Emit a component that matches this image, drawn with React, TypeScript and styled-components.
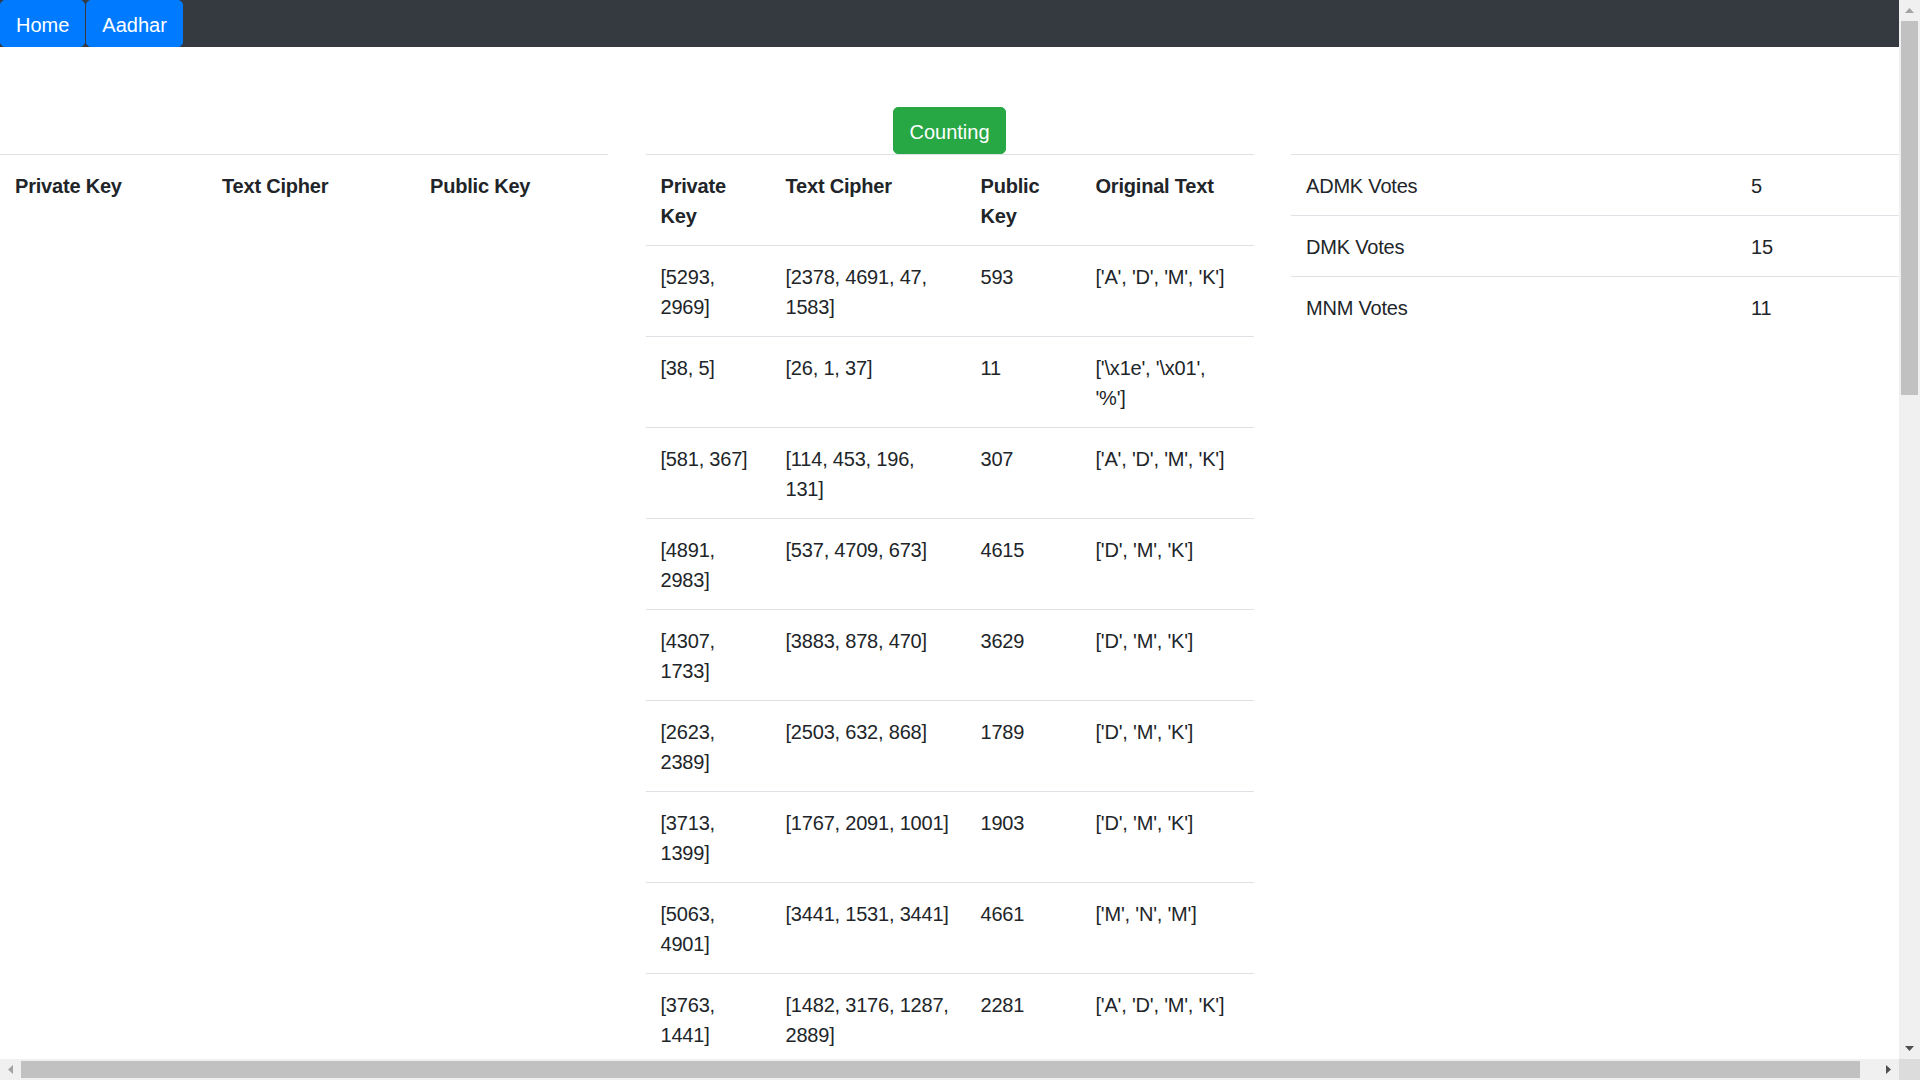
import React from "react";
import styled, { createGlobalStyle } from "styled-components";

const GlobalStyle = createGlobalStyle`
  *, *::before, *::after { box-sizing: border-box; }
  html, body { margin: 0; padding: 0; overflow: hidden; background: #fff; }
  body {
    font-family: "Liberation Sans", Arial, sans-serif;
    font-size: 20px;
    line-height: 1.5;
    color: #212529;
  }
`;

/* ---------- window frame with browser scrollbars ---------- */
const Frame = styled.div`
  display: grid;
  grid-template-columns: 1fr 21px;
  grid-template-rows: 1fr 21px;
  width: 100vw;
  height: 100vh;
`;

const Viewport = styled.div`
  min-width: 0;
  min-height: 0;
  overflow: hidden;
  background: #fff;
`;

const VScrollbar = styled.div`
  display: flex;
  flex-direction: column;
  background: #f0f0f0;
`;

const HScrollbar = styled.div`
  display: flex;
  background: #f0f0f0;
`;

const ScrollCorner = styled.div`
  background: #dcdcdc;
`;

const ArrowButton = styled.div`
  flex: none;
  width: 21px;
  height: 21px;
  display: flex;
  align-items: center;
  justify-content: center;
`;

const VTrack = styled.div`
  flex: 1;
  padding: 0 2px;
`;

const HTrack = styled.div`
  flex: 1;
  padding: 2px 0;
`;

const VThumb = styled.div`
  height: 374px;
  background: #c1c1c1;
`;

const HThumb = styled.div`
  width: 1839px;
  height: 100%;
  background: #c1c1c1;
`;

type Dir = "up" | "down" | "left" | "right";
const Arrow: React.FC<{ dir: Dir; color: string }> = ({ dir, color }) => {
  const pts: Record<Dir, string> = {
    up: "0,5 4.5,0 9,5",
    down: "0,0 9,0 4.5,5",
    left: "5,0 5,9 0,4.5",
    right: "0,0 0,9 5,4.5",
  };
  const vertical = dir === "up" || dir === "down";
  return (
    <svg width={vertical ? 9 : 5} height={vertical ? 5 : 9} viewBox={vertical ? "0 0 9 5" : "0 0 5 9"}>
      <polygon points={pts[dir]} fill={color} />
    </svg>
  );
};

/* ---------- page ---------- */
const NavBar = styled.nav`
  display: flex;
  gap: 1px;
  height: 47px;
  background: #343a40;
`;

const NavButton = styled.button`
  height: 47px;
  padding: 9px 15px 6px;
  border: 1px solid #007bff;
  border-radius: 5px;
  background: #007bff;
  color: #fff;
  font-family: inherit;
  font-size: 20px;
  line-height: 30px;
  cursor: pointer;
`;

const Row = styled.main`
  display: grid;
  grid-template-columns: repeat(3, 1fr);
  margin: 0 -18.75px;
`;

const Col = styled.section<{ $col: number; $row: number }>`
  grid-column: ${(p) => p.$col};
  grid-row: ${(p) => p.$row};
  padding: 0 18.75px;
  min-width: 0;
`;

const ButtonCol = styled(Col)`
  display: flex;
  justify-content: center;
  padding-top: 60px;
`;

const CountButton = styled.button`
  height: 47px;
  padding: 9px 15px 6px;
  border: 1px solid #28a745;
  border-radius: 5px;
  background: #28a745;
  color: #fff;
  font-family: inherit;
  font-size: 20px;
  line-height: 30px;
  cursor: pointer;
`;

const Table = styled.table`
  width: 100%;
  border-collapse: collapse;
  table-layout: fixed;
  letter-spacing: -0.2px;
`;

const HeadCell = styled.th`
  padding: 16px 15px 14px;
  border-top: 1px solid #dee2e6;
  text-align: left;
  vertical-align: top;
  font-weight: 700;
`;

const DataCell = styled.td`
  padding: 16px 15px 14px;
  border-top: 1px solid #dee2e6;
  vertical-align: top;
  font-weight: 400;
`;

const rows: [string, string, string, string][] = [
  ["[5293, 2969]", "[2378, 4691, 47, 1583]", "593", "['A', 'D', 'M', 'K']"],
  ["[38, 5]", "[26, 1, 37]", "11", "['\\x1e', '\\x01', '%']"],
  ["[581, 367]", "[114, 453, 196, 131]", "307", "['A', 'D', 'M', 'K']"],
  ["[4891, 2983]", "[537, 4709, 673]", "4615", "['D', 'M', 'K']"],
  ["[4307, 1733]", "[3883, 878, 470]", "3629", "['D', 'M', 'K']"],
  ["[2623, 2389]", "[2503, 632, 868]", "1789", "['D', 'M', 'K']"],
  ["[3713, 1399]", "[1767, 2091, 1001]", "1903", "['D', 'M', 'K']"],
  ["[5063, 4901]", "[3441, 1531, 3441]", "4661", "['M', 'N', 'M']"],
  ["[3763, 1441]", "[1482, 3176, 1287, 2889]", "2281", "['A', 'D', 'M', 'K']"],
];

const votes: [string, number][] = [
  ["ADMK Votes", 5],
  ["DMK Votes", 15],
  ["MNM Votes", 11],
];

export default function App() {
  return (
    <>
      <GlobalStyle />
      <Frame>
        <Viewport>
          <NavBar>
            <NavButton>Home</NavButton>
            <NavButton>Aadhar</NavButton>
          </NavBar>
          <Row>
            <ButtonCol $col={2} $row={1}>
              <CountButton>Counting</CountButton>
            </ButtonCol>

            <Col $col={1} $row={2}>
              <Table>
                <colgroup>
                  <col style={{ width: 207 }} />
                  <col style={{ width: 208 }} />
                  <col />
                </colgroup>
                <tbody>
                  <tr>
                    <HeadCell>Private Key</HeadCell>
                    <HeadCell>Text Cipher</HeadCell>
                    <HeadCell>Public Key</HeadCell>
                  </tr>
                </tbody>
              </Table>
            </Col>

            <Col $col={2} $row={2}>
              <Table>
                <colgroup>
                  <col style={{ width: 125 }} />
                  <col style={{ width: 195 }} />
                  <col style={{ width: 115 }} />
                  <col />
                </colgroup>
                <tbody>
                  <tr>
                    <HeadCell>Private Key</HeadCell>
                    <HeadCell>Text Cipher</HeadCell>
                    <HeadCell>Public Key</HeadCell>
                    <HeadCell>Original Text</HeadCell>
                  </tr>
                  {rows.map((r, i) => (
                    <tr key={i}>
                      {r.map((c, j) => (
                        <DataCell key={j}>{c}</DataCell>
                      ))}
                    </tr>
                  ))}
                </tbody>
              </Table>
            </Col>

            <Col $col={3} $row={2}>
              <Table>
                <colgroup>
                  <col style={{ width: 445 }} />
                  <col />
                </colgroup>
                <tbody>
                  {votes.map(([name, n]) => (
                    <tr key={name}>
                      <DataCell>{name}</DataCell>
                      <DataCell>{n}</DataCell>
                    </tr>
                  ))}
                </tbody>
              </Table>
            </Col>
          </Row>
        </Viewport>

        <VScrollbar>
          <ArrowButton>
            <Arrow dir="up" color="#a3a3a3" />
          </ArrowButton>
          <VTrack>
            <VThumb />
          </VTrack>
          <ArrowButton>
            <Arrow dir="down" color="#505050" />
          </ArrowButton>
        </VScrollbar>

        <HScrollbar>
          <ArrowButton>
            <Arrow dir="left" color="#a3a3a3" />
          </ArrowButton>
          <HTrack>
            <HThumb />
          </HTrack>
          <ArrowButton>
            <Arrow dir="right" color="#505050" />
          </ArrowButton>
        </HScrollbar>
        <ScrollCorner />
      </Frame>
    </>
  );
}
